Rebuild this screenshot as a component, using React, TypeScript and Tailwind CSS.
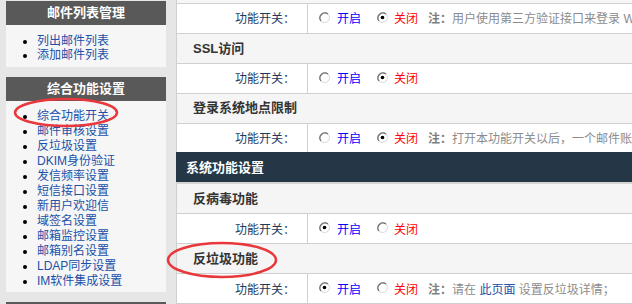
import type { ReactNode } from "react";

const mailListLinks = ["列出邮件列表", "添加邮件列表"];

const featureLinks = [
  "综合功能开关",
  "邮件审核设置",
  "反垃圾设置",
  "DKIM身份验证",
  "发信频率设置",
  "短信接口设置",
  "新用户欢迎信",
  "域签名设置",
  "邮箱监控设置",
  "邮箱别名设置",
  "LDAP同步设置",
  "IM软件集成设置",
];

function Radio({ checked }: { checked: boolean }) {
  return (
    <svg width="11" height="11" viewBox="0 0 11 11" className="mb-[4px] shrink-0">
      <circle cx="5.5" cy="5.5" r="5" fill="#fff" stroke="#d6d6d6" />
      <path d="M2 9 A5 5 0 0 1 9 2" stroke="#6b6b6b" strokeWidth="1.2" fill="none" />
      {checked && <circle cx="5.5" cy="5.5" r="1.8" fill="#000" />}
    </svg>
  );
}

function SwitchRow({ on, note, bottom }: { on: boolean; note?: ReactNode; bottom?: boolean }) {
  return (
    <div
      className={`flex h-[30px] border-l border-[#d0d0d0] bg-white ${bottom ? "border-b" : "border-t"}`}
    >
      <div className="w-[131px] shrink-0 border-r border-[#d0d0d0] flex items-center justify-end pr-[12px] pt-[2px] text-[#1d3a5c]">
        功能开关：
      </div>
      <div className="flex items-center pl-[11px] pt-[2px] whitespace-nowrap overflow-hidden">
        <Radio checked={on} />
        <span className="ml-[7px] text-[#0000ff]">开启</span>
        <span className="ml-[16px] flex">
          <Radio checked={!on} />
        </span>
        <span className="ml-[6px] text-[#ff0000]">关闭</span>
        {note && (
          <span className="ml-[10px] text-[#8c8c8c]">
            <b className="text-[#808080]">注：</b>
            {note}
          </span>
        )}
      </div>
    </div>
  );
}

function TitleRow({ title, bottom }: { title: string; bottom?: boolean }) {
  return (
    <div
      className={`flex items-center h-[30px] border-l border-[#d0d0d0] bg-[#f5f5f5] pl-[16px] text-[13px] font-bold text-[#333] ${bottom ? "border-b" : "border-t"}`}
    >
      {title}
    </div>
  );
}

function SidePanel({ title, links, lead }: { title?: string; links: string[]; lead: string }) {
  return (
    <div>
      <div className="h-[24px] bg-[#595959] flex items-center justify-center text-white text-[13px] font-bold">
        {title}
      </div>
      {links.length > 0 && (
        <ul className={`bg-[#f6f6f6] pl-[31px] list-disc marker:text-black ${lead}`}>
          {links.map((l) => (
            <li key={l} className="text-[#2050a8]">
              {l}
            </li>
          ))}
        </ul>
      )}
    </div>
  );
}

export default function App() {
  return (
    <div className="relative w-[632px] h-[304px] overflow-hidden bg-[#e6e6e6] flex text-[12px] font-['Liberation_Sans','Noto_Sans_CJK_SC',sans-serif]">
      {/* Sidebar */}
      <div className="w-[160px] ml-[6px] mt-[1px] shrink-0 flex flex-col gap-[10px]">
        <SidePanel title="邮件列表管理" links={mailListLinks} lead="leading-[14px] pt-[9px] pb-[5px]" />
        <SidePanel title="综合功能设置" links={featureLinks} lead="leading-[15px] pt-[8px] pb-[3px]" />
        <SidePanel links={[]} lead="" />
      </div>

      {/* Main */}
      <div className="ml-[10px] flex-1 flex flex-col min-w-0">
        <div className="h-[3px] shrink-0 bg-[#f7f7f7] border-l border-[#d0d0d0]" />
        <SwitchRow on={false} note="用户使用第三方验证接口来登录 WebMail 时使用" />
        <TitleRow title="SSL访问" />
        <SwitchRow on={false} />
        <TitleRow title="登录系统地点限制" />
        <SwitchRow on={false} note="打开本功能开关以后，一个邮件账号只能在指定地点登录" />
        <div className="h-[30px] shrink-0 bg-[#253746] flex items-center pl-[10px] text-white text-[13px] font-bold border-t border-[#253746]">
          系统功能设置
        </div>
        <div className="h-[2px] shrink-0 bg-[#d4d4d4]" />
        <TitleRow title="反病毒功能" bottom />
        <SwitchRow on={true} bottom />
        <TitleRow title="反垃圾功能" bottom />
        <SwitchRow
          on={true}
          bottom
          note={
            <>
              请在 <span className="text-[#2050a8]">此页面</span> 设置反垃圾详情；
            </>
          }
        />
      </div>

      {/* red annotation marks */}
      <svg className="absolute left-[13px] top-[97px]" width="106" height="31" viewBox="0 0 106 31">
        <ellipse cx="53" cy="15.5" rx="51" ry="13.5" fill="none" stroke="#e8383b" strokeWidth="2.5" />
      </svg>
      <svg className="absolute left-[166px] top-[241px]" width="112" height="38" viewBox="0 0 112 38">
        <ellipse cx="56" cy="19" rx="54" ry="17" fill="none" stroke="#e8383b" strokeWidth="2.5" />
      </svg>
    </div>
  );
}
